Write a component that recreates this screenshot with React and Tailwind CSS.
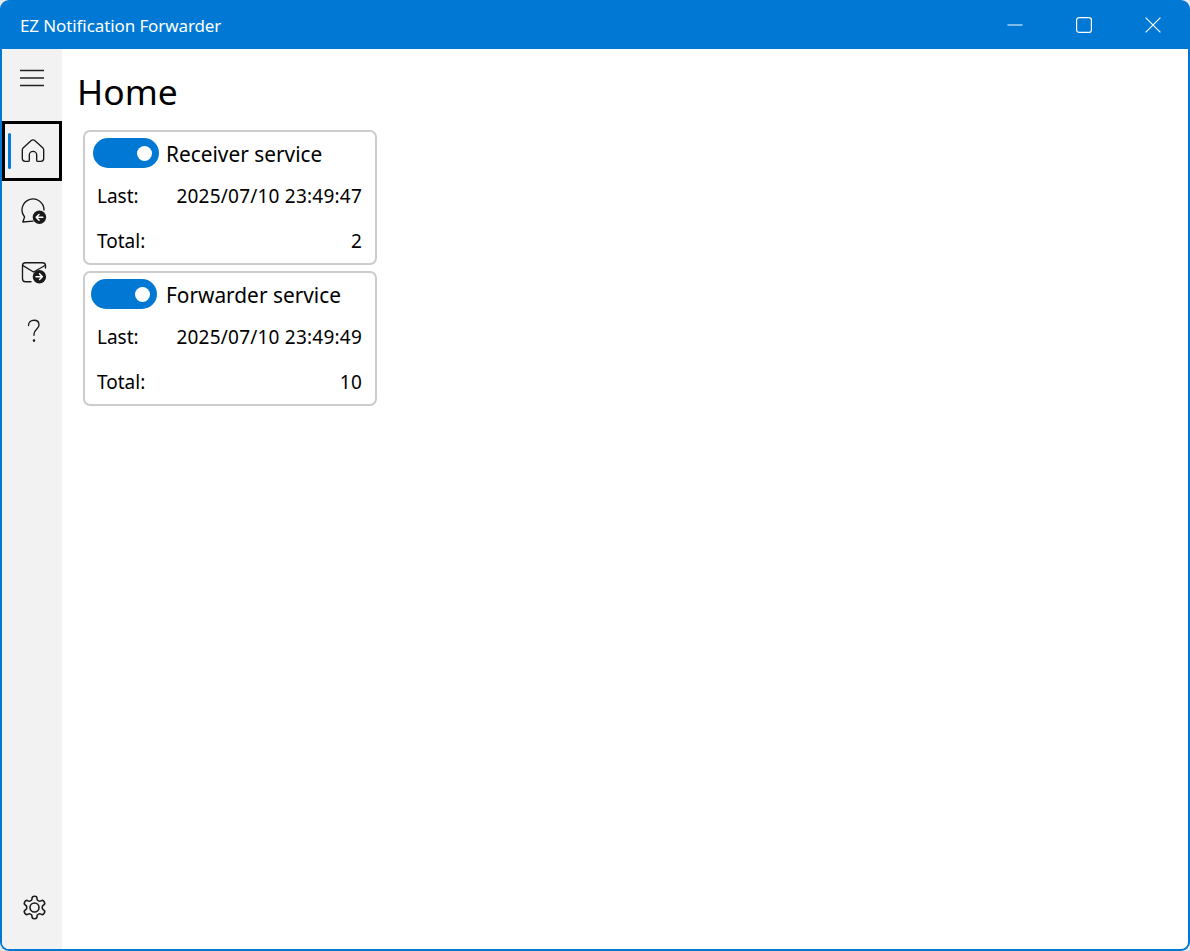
function Toggle({ className }) {
  return (
    <div className={`flex h-[30px] w-[66px] shrink-0 items-center justify-end rounded-full bg-[#0078d4] pr-[7px] ${className}`}>
      <div className="h-[15px] w-[15px] rounded-full bg-white" />
    </div>
  );
}

function Card({ title, last, total, toggleClass, gapClass }) {
  return (
    <div className="flex h-[135px] w-[294px] flex-col rounded-[7px] border-2 border-[#cccccc] bg-white">
      <div className={`mt-[6px] flex h-[30px] items-center ${gapClass}`}>
        <Toggle className={toggleClass} />
        <span className="pt-[1px] text-[20.85px] leading-[30px] text-black">{title}</span>
      </div>
      <div className="mt-[14px] flex h-[28px] items-center justify-between pl-[12px] pr-[13px] text-[19px] text-black">
        <span>Last:</span>
        <span className="tracking-[0.22px]">{last}</span>
      </div>
      <div className="mt-[17px] flex h-[28px] items-center justify-between pl-[12px] pr-[13px] text-[19px] text-black">
        <span>Total:</span>
        <span className="tracking-[0.22px]">{total}</span>
      </div>
    </div>
  );
}

function NavItem({ children, selected }) {
  return (
    <div className={`relative flex h-[60px] w-[60px] items-center justify-center ${selected ? "border-[3px] border-black pl-[1px]" : "pl-[4px]"}`}>
      {selected && <div className="absolute left-[3px] top-[9px] h-[36px] w-[3px] rounded-full bg-[#0078d4]" />}
      {children}
    </div>
  );
}

const stroke = { fill: "none", stroke: "#1a1a1a", strokeWidth: 1.35, strokeLinecap: "round", strokeLinejoin: "round" };

export default function App() {
  return (
    <div className="h-[951px] w-[1190px] bg-[#e8e8e8] font-['Noto_Sans',sans-serif]">
      <div className="flex h-full w-full flex-col overflow-hidden rounded-[9px] bg-[#0078d4]">
        <div className="flex h-[49px] shrink-0 items-center justify-between text-white">
          <span className="pl-[20px] pt-[3px] text-[17px] tracking-[-0.1px]">EZ Notification Forwarder</span>
          <div className="flex h-full items-center pr-[3px]">
            <div className="flex h-full w-[69px] items-center justify-center">
              <svg width="16" height="16" viewBox="0 0 16 16"><path d="M0.5 8h15" stroke="#fff" strokeWidth="1" fill="none" /></svg>
            </div>
            <div className="flex h-full w-[69px] items-center justify-center">
              <svg width="16" height="16" viewBox="0 0 16 16"><rect x="0.6" y="0.6" width="14.8" height="14.8" rx="2.5" stroke="#fff" strokeWidth="1.2" fill="none" /></svg>
            </div>
            <div className="flex h-full w-[69px] items-center justify-center">
              <svg width="16" height="16" viewBox="0 0 16 16"><path d="M0.6 0.6l14.8 14.8M15.4 0.6L0.6 15.4" stroke="#fff" strokeWidth="1.1" fill="none" /></svg>
            </div>
          </div>
        </div>
        <div className="mx-[2px] mb-[2px] flex min-h-0 flex-1 overflow-hidden rounded-b-[7px] bg-white">
          <div className="flex h-full w-[60px] shrink-0 flex-col bg-[#f2f2f2]">
            <div className="flex h-[58px] items-center justify-center pr-[1px]">
              <svg width="26" height="20" viewBox="0 0 26 20"><path d="M1 2.5h24M1 10h24M1 17.5h24" stroke="#222" strokeWidth="1.4" fill="none" /></svg>
            </div>
            <div className="mt-[14px] flex flex-col">
              <NavItem selected>
                <svg width="24" height="24" viewBox="0 0 24 24" {...stroke}>
                  <path d="M2.3 8.8 10 1.8a3 3 0 0 1 4 0l7.7 7a3 3 0 0 1 1 2.2v8.6a2.8 2.8 0 0 1-2.8 2.8h-3.2a1 1 0 0 1-1-1v-5.4a3.7 3.7 0 0 0-7.4 0v5.4a1 1 0 0 1-1 1H4.1a2.8 2.8 0 0 1-2.8-2.8V11a3 3 0 0 1 1-2.2Z" />
                </svg>
              </NavItem>
              <NavItem>
                <svg width="28" height="28" viewBox="0 0 28 28">
                  <path d="M13 24.2 2.8 25l1.8-5A11 11 0 1 1 24 13" {...stroke} />
                  <circle cx="19.4" cy="20.3" r="6.7" fill="#1a1a1a" />
                  <path d="M22.8 20.3h-6.4M19 17.5l-2.8 2.8 2.8 2.8" fill="none" stroke="#fff" strokeWidth="1.5" strokeLinecap="round" strokeLinejoin="round" />
                </svg>
              </NavItem>
              <NavItem>
                <svg width="28" height="28" viewBox="0 0 28 28">
                  <path d="M25.5 11V8.7a3 3 0 0 0-3-3H5.5a3 3 0 0 0-3 3v13a3 3 0 0 0 3 3H11" {...stroke} />
                  <path d="M3 8.7 13.5 15 25 8.5" {...stroke} />
                  <circle cx="19.4" cy="19.7" r="6.7" fill="#1a1a1a" />
                  <path d="M16 19.7h6.4M19.6 16.9l2.8 2.8-2.8 2.8" fill="none" stroke="#fff" strokeWidth="1.5" strokeLinecap="round" strokeLinejoin="round" />
                </svg>
              </NavItem>
              <NavItem>
                <svg width="24" height="24" viewBox="0 0 24 24" {...stroke}>
                  <path d="M6.5 6.5C6.5 3 9.2 1.2 12 1.2c3 0 5 2 5 4.7 0 4-5 4.6-5 9v1.3" />
                  <circle cx="12" cy="21.6" r="0.6" fill="#1a1a1a" />
                </svg>
              </NavItem>
            </div>
            <div className="mb-[12px] mt-auto">
              <NavItem>
                <svg width="27" height="27" viewBox="0 0 24 24" {...stroke} strokeWidth="1.4">
                  <path d="M12.22 2h-.44a2 2 0 0 0-2 2v.18a2 2 0 0 1-1 1.73l-.43.25a2 2 0 0 1-2 0l-.15-.08a2 2 0 0 0-2.73.73l-.22.38a2 2 0 0 0 .73 2.73l.15.1a2 2 0 0 1 1 1.72v.51a2 2 0 0 1-1 1.74l-.15.09a2 2 0 0 0-.73 2.73l.22.38a2 2 0 0 0 2.73.73l.15-.08a2 2 0 0 1 2 0l.43.25a2 2 0 0 1 1 1.73V20a2 2 0 0 0 2 2h.44a2 2 0 0 0 2-2v-.18a2 2 0 0 1 1-1.73l.43-.25a2 2 0 0 1 2 0l.15.08a2 2 0 0 0 2.73-.73l.22-.39a2 2 0 0 0-.73-2.73l-.15-.08a2 2 0 0 1-1-1.74v-.5a2 2 0 0 1 1-1.74l.15-.09a2 2 0 0 0 .73-2.73l-.22-.38a2 2 0 0 0-2.73-.73l-.15.08a2 2 0 0 1-2 0l-.43-.25a2 2 0 0 1-1-1.73V4a2 2 0 0 0-2-2z" />
                  <circle cx="12" cy="12" r="4" />
                </svg>
              </NavItem>
            </div>
          </div>
          <div className="flex min-w-0 flex-1 flex-col pl-[21px]">
            <h1 className="-ml-[6px] mt-[17px] h-[50px] text-[35.4px] font-normal leading-[50px] text-black">Home</h1>
            <div className="mt-[14px] flex flex-col gap-[6px]">
              <Card title="Receiver service" last="2025/07/10 23:49:47" total="2" toggleClass="ml-[8px]" gapClass="gap-[7px]" />
              <Card title="Forwarder service" last="2025/07/10 23:49:49" total="10" toggleClass="ml-[6px]" gapClass="gap-[9px]" />
            </div>
          </div>
        </div>
      </div>
    </div>
  );
}
